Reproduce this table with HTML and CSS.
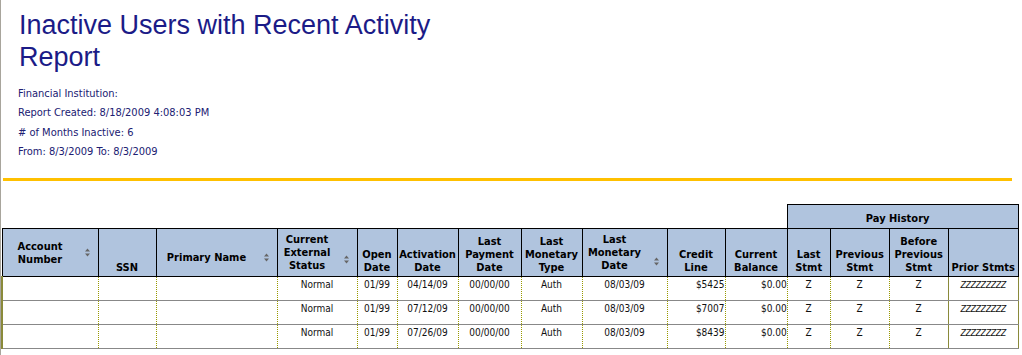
FILE: index.html
```html
<!DOCTYPE html>
<html>
<head>
<meta charset="utf-8">
<title>Inactive Users with Recent Activity Report</title>
<link rel="stylesheet" href="styles.css">
</head>
<body>
<div class="page">
  <h1 class="title">Inactive Users with Recent Activity<br>Report</h1>
  <div class="info">
    <div class="info-line">Financial Institution:</div>
    <div class="info-line">Report Created: 8/18/2009 4:08:03 PM</div>
    <div class="info-line"># of Months Inactive: 6</div>
    <div class="info-line">From: 8/3/2009 To: 8/3/2009</div>
  </div>
  <div class="rule"></div>
  <table class="grid">
    <colgroup>
      <col class="c-acct"><col class="c-ssn"><col class="c-name"><col class="c-ext"><col class="c-open"><col class="c-act"><col class="c-lpd"><col class="c-lmt"><col class="c-lmd"><col class="c-cl"><col class="c-bal"><col class="c-ls"><col class="c-ps"><col class="c-bps"><col class="c-prior">
    </colgroup>
    <thead>
      <tr class="group-row">
        <th class="blank" colspan="11"></th>
        <th class="pay" colspan="4">Pay History</th>
      </tr>
      <tr class="head-row">
        <th class="sortable"><div class="hs"><span class="ht">Account<br>Number</span><span class="hi"><svg width="7" height="11" viewBox="0 0 7 11"><path d="M1 4.5 L3.5 1.5 L6 4.5 Z M1 6.5 L6 6.5 L3.5 9.5 Z" fill="#666"/></svg></span></div></th>
        <th>SSN</th>
        <th class="sortable pad-name"><div class="hs"><span class="ht">Primary Name</span><span class="hi"><svg width="7" height="11" viewBox="0 0 7 11"><path d="M1 4.5 L3.5 1.5 L6 4.5 Z M1 6.5 L6 6.5 L3.5 9.5 Z" fill="#666"/></svg></span></div></th>
        <th class="sortable"><div class="hs"><span class="ht">Current<br>External<br>Status</span><span class="hi low1"><svg width="7" height="11" viewBox="0 0 7 11"><path d="M1 4.5 L3.5 1.5 L6 4.5 Z M1 6.5 L6 6.5 L3.5 9.5 Z" fill="#666"/></svg></span></div></th>
        <th>Open<br>Date</th>
        <th>Activation<br>Date</th>
        <th>Last<br>Payment<br>Date</th>
        <th>Last<br>Monetary<br>Type</th>
        <th class="sortable"><div class="hs"><span class="ht">Last<br>Monetary<br>Date</span><span class="hi low2"><svg width="7" height="11" viewBox="0 0 7 11"><path d="M1 4.5 L3.5 1.5 L6 4.5 Z M1 6.5 L6 6.5 L3.5 9.5 Z" fill="#666"/></svg></span></div></th>
        <th>Credit<br>Line</th>
        <th>Current<br>Balance</th>
        <th>Last<br>Stmt</th>
        <th>Previous<br>Stmt</th>
        <th>Before<br>Previous<br>Stmt</th>
        <th>Prior Stmts</th>
      </tr>
    </thead>
    <tbody>
      <tr>
        <td class="first"></td><td></td><td></td>
        <td class="ctr">Normal</td><td class="ctr">01/99</td><td class="ctr">04/14/09</td><td class="ctr">00/00/00</td><td class="ctr">Auth</td><td class="ctr">08/03/09</td>
        <td class="num">$5425</td><td class="num">$0.00</td>
        <td class="ctr">Z</td><td class="ctr">Z</td><td class="ctr">Z</td><td class="ctr prior">ZZZZZZZZZ</td>
      </tr>
      <tr>
        <td class="first"></td><td></td><td></td>
        <td class="ctr">Normal</td><td class="ctr">01/99</td><td class="ctr">07/12/09</td><td class="ctr">00/00/00</td><td class="ctr">Auth</td><td class="ctr">08/03/09</td>
        <td class="num">$7007</td><td class="num">$0.00</td>
        <td class="ctr">Z</td><td class="ctr">Z</td><td class="ctr">Z</td><td class="ctr prior">ZZZZZZZZZ</td>
      </tr>
      <tr>
        <td class="first"></td><td></td><td></td>
        <td class="ctr">Normal</td><td class="ctr">01/99</td><td class="ctr">07/26/09</td><td class="ctr">00/00/00</td><td class="ctr">Auth</td><td class="ctr">08/03/09</td>
        <td class="num">$8439</td><td class="num">$0.00</td>
        <td class="ctr">Z</td><td class="ctr">Z</td><td class="ctr">Z</td><td class="ctr prior">ZZZZZZZZZ</td>
      </tr>
    </tbody>
  </table>
</div>
</body>
</html>
```

FILE: styles.css
```css
html, body {
  margin: 0;
  padding: 0;
  background: #ffffff;
}

.page {
  border-left: 1px solid #a8a59c;
  min-height: 355px;
  box-sizing: border-box;
  padding-left: 1px;
  padding-top: 9px;
}

.title {
  margin: 0 0 0 17px;
  font-family: "Liberation Sans", Arial, sans-serif;
  font-weight: normal;
  font-size: 27px;
  line-height: 32px;
  color: #1b1b87;
}

.info {
  margin: 11px 0 0 16px;
  font-family: "DejaVu Sans Condensed", "DejaVu Sans", sans-serif;
  font-stretch: condensed;
  font-size: 11px;
  line-height: 19.3px;
  color: #202072;
}

.rule {
  margin: 17px 0 0 1px;
  width: 1009px;
  height: 3px;
  background: #ffc000;
}

.grid {
  margin: 23px 0 0 -1px;
  width: 1016px;
  table-layout: fixed;
  border-collapse: collapse;
  font-family: "DejaVu Sans Condensed", "DejaVu Sans", sans-serif;
  font-stretch: condensed;
}

.c-acct { width: 96px; }
.c-ssn { width: 58px; }
.c-name { width: 121px; }
.c-ext { width: 80px; }
.c-open { width: 40px; }
.c-act { width: 61px; }
.c-lpd { width: 63px; }
.c-lmt { width: 61px; }
.c-lmd { width: 85px; }
.c-cl { width: 58px; }
.c-bal { width: 62px; }
.c-ls { width: 43px; }
.c-ps { width: 59px; }
.c-bps { width: 59px; }
.c-prior { width: 70px; }

.grid th {
  background: #b0c4de;
  border: 1px solid #000000;
  font-size: 11px;
  font-weight: bold;
  line-height: 13px;
  color: #000000;
  text-align: center;
  vertical-align: bottom;
  padding: 0 0 2px 0;
  white-space: nowrap;
  overflow: hidden;
}

.grid th.blank {
  background: transparent;
  border: none;
}

.group-row {
  height: 24px;
}

.grid th.pay {
  padding: 0 10px 3px 0;
}

.head-row {
  height: 48px;
}

.grid th.sortable {
  vertical-align: middle;
  padding: 0;
}

.grid th.pad-name {
  padding-top: 10px;
}

.hs {
  display: flex;
  align-items: center;
}

.ht {
  flex: 1;
  text-align: center;
}

.hi {
  width: 20px;
  display: flex;
  justify-content: center;
}

.hi.low1 {
  margin-top: 14px;
}

.hi.low2 {
  margin-top: 18px;
}

.grid tbody tr {
  height: 24px;
}

.grid td {
  border-left: 1px dotted #999900;
  border-right: 1px dotted #999900;
  border-bottom: 1px solid #888888;
  font-size: 10px;
  line-height: 12px;
  color: #111111;
  vertical-align: top;
  padding: 2px 0 0 0;
  white-space: nowrap;
}

.grid td.first {
  border-left: 2px solid #8a8a3a;
}

.grid td.ctr {
  text-align: center;
}

.grid td.num {
  text-align: right;
}

.grid td.prior {
  border-left: 1px solid #8a8a3a;
  border-right: 1px solid #8a8a3a;
  font-size: 9px;
  font-style: italic;
  letter-spacing: -0.5px;
}
```
